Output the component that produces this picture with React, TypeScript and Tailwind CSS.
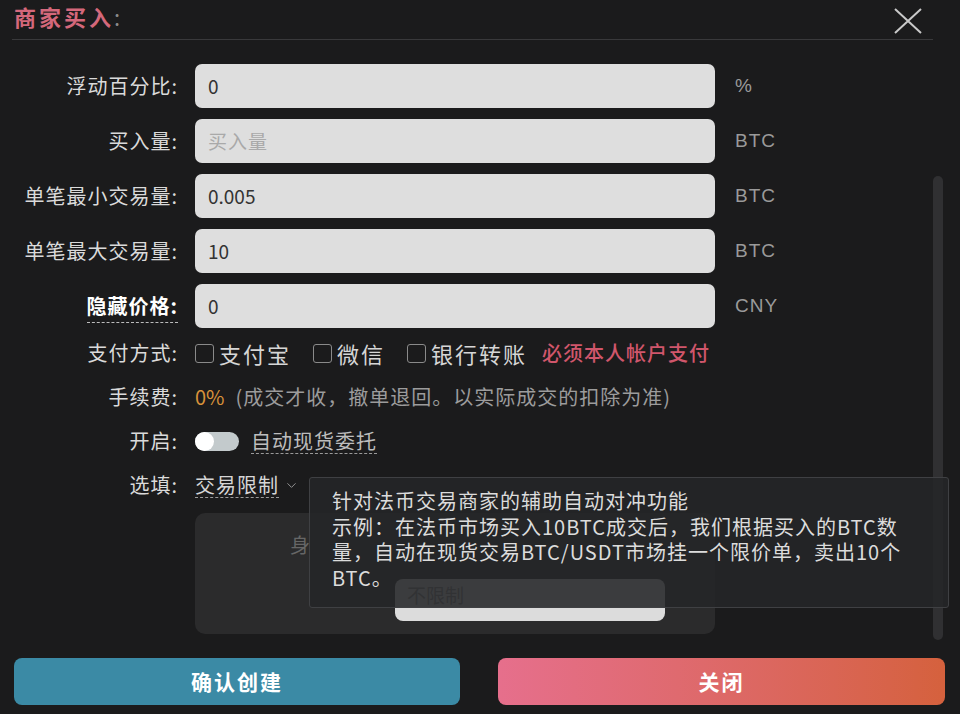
import { ChevronDown } from "lucide-react";

const labelCls =
  "w-[178px] shrink-0 text-right text-[20px] tracking-[1px] text-[#dadada] leading-none";

interface InputRowProps {
  label: string;
  value?: string;
  placeholder?: string;
  unit: string;
  strong?: boolean;
}

function InputRow({ label, value, placeholder, unit, strong }: InputRowProps) {
  return (
    <div className="flex items-center h-[44px]">
      <div className={labelCls}>
        {strong ? (
          <span className="font-bold text-white border-b border-dashed border-[#bdbdbd] pb-[2px]">
            {label}
          </span>
        ) : (
          label
        )}
      </div>
      <div className="ml-[17px] w-[520px] h-[44px] rounded-[7px] bg-[#dedede] flex items-center px-[13px] text-[19px] text-[#333]">
        {value ? value : <span className="text-[#a9a9a9] tracking-[1px]">{placeholder}</span>}
      </div>
      <div className="ml-[20px] text-[19px] tracking-[1px] text-[#9a9a9a] font-['Liberation_Sans',sans-serif]">
        {unit}
      </div>
    </div>
  );
}

function Check({ text }: { text: string }) {
  return (
    <div className="flex items-center">
      <div className="w-[19px] h-[19px] border-[1.5px] border-[#8a8a8a] rounded-[3px]" />
      <span className="ml-[5px] text-[22px] tracking-[2px] text-[#d6d6d6]">{text}</span>
    </div>
  );
}

export default function App() {
  return (
    <div className="relative w-[960px] h-[714px] overflow-hidden bg-[#1b1b1c] flex flex-col font-['Noto_Sans_CJK_SC',sans-serif]">
      {/* header */}
      <div className="h-[40px] ml-[12px] mr-[27px] border-b border-[#39393b] flex items-center justify-between shrink-0">
        <div className="pl-[2px] pb-[6px] text-[22px] tracking-[3px] font-semibold text-[#d4687b]">
          商家买入<span className="text-[#8a8a8a] font-normal">:</span>
        </div>
        <svg width="30" height="26" viewBox="0 0 30 26" className="mt-[2px] mr-[10px]">
          <path d="M2 1 L28 25 M28 1 L2 25" stroke="#c9c9c9" strokeWidth="2" fill="none" />
        </svg>
      </div>

      {/* form */}
      <div className="pt-[24px] flex flex-col gap-[11px]">
        <InputRow label="浮动百分比:" value="0" unit="%" />
        <InputRow label="买入量:" placeholder="买入量" unit="BTC" />
        <InputRow label="单笔最小交易量:" value="0.005" unit="BTC" />
        <InputRow label="单笔最大交易量:" value="10" unit="BTC" />
        <InputRow label="隐藏价格:" value="0" unit="CNY" strong />
      </div>

      <div className="mt-[3px] flex flex-col">
        <div className="flex items-center h-[44px]">
          <div className={labelCls}>支付方式:</div>
          <div className="ml-[17px] flex items-center gap-[22px]">
            <Check text="支付宝" />
            <Check text="微信" />
            <Check text="银行转账" />
          </div>
          <span className="ml-[15px] text-[20px] tracking-[1px] font-medium text-[#d0566b]">
            必须本人帐户支付
          </span>
        </div>

        <div className="flex items-center h-[44px]">
          <div className={labelCls}>手续费:</div>
          <span className="ml-[17px] text-[20px] text-[#d8923a]">0%</span>
          <span className="ml-[11px] text-[20px] tracking-[1px] text-[#9c9c9c]">
            (成交才收，撤单退回。以实际成交的扣除为准)
          </span>
        </div>

        <div className="flex items-center h-[44px]">
          <div className={labelCls}>开启:</div>
          <div className="ml-[17px] w-[44px] h-[19px] rounded-full bg-[#c3cacc] flex items-center">
            <div className="w-[19px] h-[19px] rounded-full bg-white" />
          </div>
          <span className="ml-[12px] text-[20px] tracking-[1px] text-[#bdbdbd] border-b border-dashed border-[#9a9a9a] leading-tight">
            自动现货委托
          </span>
        </div>

        <div className="flex items-center h-[44px]">
          <div className={labelCls}>选填:</div>
          <span className="ml-[17px] text-[20px] tracking-[1px] text-[#d6d6d6] border-b border-dashed border-[#9a9a9a] leading-tight">
            交易限制
          </span>
          <ChevronDown size={15} strokeWidth={1.5} className="ml-[5px] text-[#9a9a9a]" />
        </div>
      </div>

      {/* restriction panel */}
      <div className="mt-[6px] ml-[195px] w-[520px] h-[121px] rounded-[10px] bg-[#2b2b2c] flex flex-col shrink-0">
        <div className="mt-[22px] ml-[95px] text-[20px] text-[#666] leading-none">身</div>
        <div className="mt-[24px] ml-[200px] w-[270px] h-[42px] rounded-[8px] bg-[#dcdcdc] flex items-start px-[12px] pt-[6px] text-[19px] leading-none text-[#8c8c8c]">
          不限制
        </div>
      </div>

      {/* buttons */}
      <div className="mt-[24px] ml-[14px] flex gap-[38px]">
        <button className="w-[446px] h-[47px] rounded-[8px] bg-[#3b8aa5] text-white text-[21px] font-bold tracking-[2px]">
          确认创建
        </button>
        <button className="w-[447px] h-[47px] rounded-[8px] bg-gradient-to-r from-[#e66f8c] to-[#d5613d] text-white text-[21px] font-bold tracking-[2px]">
          关闭
        </button>
      </div>

      {/* scrollbar */}
      <div className="absolute left-[933px] top-[176px] w-[10px] h-[464px] rounded-full bg-[#303032]" />

      {/* tooltip */}
      <div className="absolute left-[309px] top-[477px] w-[640px] h-[131px] border border-[#3f4043] rounded-[3px] bg-[rgba(36,37,40,0.88)] pl-[22px] pt-[10px] text-[20px] tracking-[1px] leading-[25.5px] text-[#dcdcdc]">
        <div className="whitespace-nowrap">针对法币交易商家的辅助自动对冲功能</div>
        <div className="whitespace-nowrap">示例：在法币市场买入10BTC成交后，我们根据买入的BTC数</div>
        <div className="whitespace-nowrap">量，自动在现货交易BTC/USDT市场挂一个限价单，卖出10个</div>
        <div className="whitespace-nowrap">BTC。</div>
      </div>
    </div>
  );
}
